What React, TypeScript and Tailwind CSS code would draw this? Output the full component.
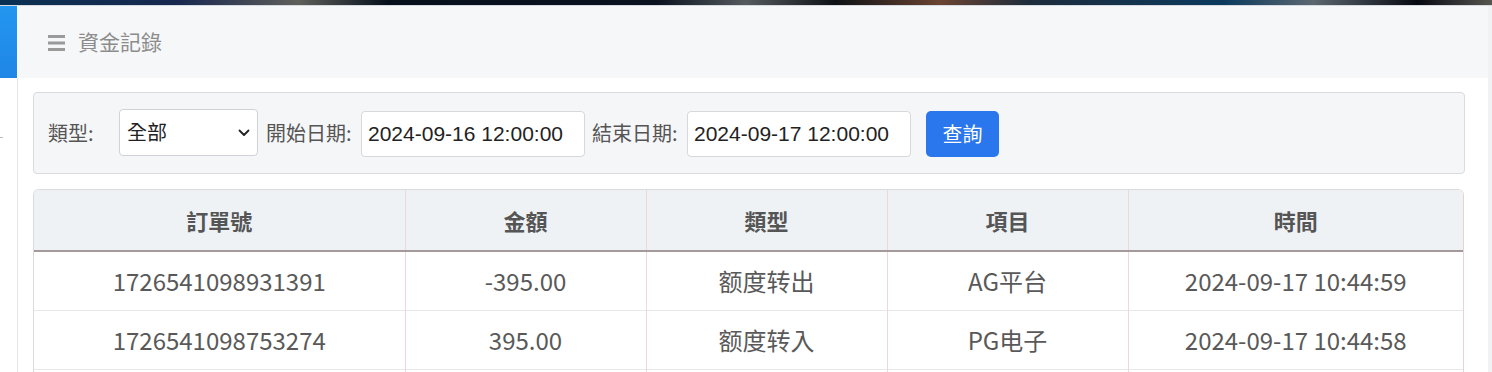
const rows = [
  { id: "1726541098931391", amount: "-395.00", type: "额度转出", item: "AG平台", time: "2024-09-17 10:44:59" },
  { id: "1726541098753274", amount: "395.00", type: "额度转入", item: "PG电子", time: "2024-09-17 10:44:58" },
];

const cjk = "font-['Microsoft_JhengHei','Noto_Sans_CJK_TC',sans-serif]";

export default function App() {
  return (
    <div className="flex h-[372px] w-[1492px] flex-col overflow-hidden bg-white">
      {/* top banner strip */}
      <div className="h-[5px] shrink-0 bg-[linear-gradient(90deg,#0a3152_0%,#182850_12%,#5f5f5a_20%,#06101c_26%,#0b1220_44%,#555a5e_50%,#0e1216_56%,#6b4332_63%,#1d2c3c_69%,#0b3a5e_82%,#5c6770_88%,#070912_95%,#575650_100%)]" />
      <div className="h-px shrink-0 bg-[#d6dae0]" />

      <div className="flex min-h-0 flex-1">
        <div className="flex w-[18px] shrink-0 flex-col">
          <div className="h-[72px] w-[17px] shrink-0 bg-[linear-gradient(180deg,#2396f0,#1f86e6)]" />
          <div className="relative flex-1 border-r border-[#e3e5e8]">
            <div className="absolute left-0 top-[59px] h-px w-[3px] bg-[#bbb]" />
          </div>
        </div>

        <div className="flex w-[1470px] shrink-0 flex-col">
          <div className="flex h-[72px] shrink-0 items-center bg-[#f6f7f9] pl-[30px]">
            <svg width="17" height="17" viewBox="0 0 17 17" className="mr-[13px]">
              <rect x="0" y="1" width="17" height="3" fill="#9a9a9a" />
              <rect x="0" y="7.5" width="17" height="3" fill="#9a9a9a" />
              <rect x="0" y="14" width="17" height="3" fill="#9a9a9a" />
            </svg>
            <span className={`${cjk} text-[21px] text-[#8c8c8c]`}>資金記錄</span>
          </div>

          <div className="pl-[15px] pr-[23px] pt-[14px]">
            <div className="flex h-[82px] items-center rounded-[4px] border border-[#d9dbde] bg-[#f5f6f8] pl-[14px]">
              <span className={`${cjk} w-[71px] text-[20px] text-[#555]`}>類型:</span>
              <div className="relative mb-[2px]">
                <select
                  defaultValue="all"
                  className={`${cjk} h-[47px] w-[139px] appearance-none rounded-[4px] border border-[#cfd2d6] bg-white px-[7px] text-[20px] text-[#222]`}
                >
                  <option value="all">全部</option>
                </select>
                <svg
                  width="12"
                  height="8"
                  viewBox="0 0 12 8"
                  className="pointer-events-none absolute right-[8px] top-[20px]"
                >
                  <path d="M1.5 1.5 L6 6 L10.5 1.5" fill="none" stroke="#222" strokeWidth="1.8" strokeLinecap="round" strokeLinejoin="round" />
                </svg>
              </div>
              <span className={`${cjk} ml-[8px] w-[95px] text-[20px] text-[#555]`}>開始日期:</span>
              <input
                readOnly
                defaultValue="2024-09-16 12:00:00"
                className="mt-[1px] h-[46px] w-[224px] rounded-[4px] border border-[#d6d8db] bg-white px-[6px] font-['Liberation_Sans',Arial,sans-serif] text-[21px] text-[#222]"
              />
              <span className={`${cjk} ml-[7px] w-[95px] text-[20px] text-[#555]`}>結束日期:</span>
              <input
                readOnly
                defaultValue="2024-09-17 12:00:00"
                className="mt-[1px] h-[46px] w-[224px] rounded-[4px] border border-[#d6d8db] bg-white px-[6px] font-['Liberation_Sans',Arial,sans-serif] text-[21px] text-[#222]"
              />
              <button className={`${cjk} ml-[15px] mt-[1px] h-[46px] w-[73px] rounded-[5px] bg-[#2a76ec] text-[20px] text-white`}>
                查詢
              </button>
            </div>

            <div className="mt-[15px] h-[200px] w-[1431px] overflow-hidden rounded-t-[6px] border border-b-0 border-[#d9dcdf] border-r-[#e8d2d2]">
              <table className={`${cjk} w-full table-fixed border-collapse text-center`}>
                <colgroup>
                  <col className="w-[371px]" />
                  <col className="w-[241px]" />
                  <col className="w-[241px]" />
                  <col className="w-[241px]" />
                  <col />
                </colgroup>
                <thead>
                  <tr className="h-[61px] border-b-2 border-[#a39a9a] bg-[#eef2f5] text-[22px] font-bold text-[#555]">
                    <th>訂單號</th>
                    <th className="border-l border-[#f0d6d6]">金額</th>
                    <th className="border-l border-[#f0d6d6]">類型</th>
                    <th className="border-l border-[#f0d6d6]">項目</th>
                    <th className="border-l border-[#f0d6d6]">時間</th>
                  </tr>
                </thead>
                <tbody className="text-[24px] text-[#595959]">
                  {rows.map((r) => (
                    <tr key={r.id} className="h-[59px] border-b border-[#e8e8e8]">
                      <td>{r.id}</td>
                      <td className="border-l border-[#f0d6d6]">{r.amount}</td>
                      <td className="border-l border-[#f0d6d6]">{r.type}</td>
                      <td className="border-l border-[#f0d6d6]">{r.item}</td>
                      <td className="border-l border-[#f0d6d6]">{r.time}</td>
                    </tr>
                  ))}
                  <tr className="h-[59px]">
                    <td />
                    <td className="border-l border-[#f0d6d6]" />
                    <td className="border-l border-[#f0d6d6]" />
                    <td className="border-l border-[#f0d6d6]" />
                    <td className="border-l border-[#f0d6d6]" />
                  </tr>
                </tbody>
              </table>
            </div>
          </div>
        </div>

        <div className="w-[4px] shrink-0 bg-[#f1f2f4]" />
      </div>
    </div>
  );
}
